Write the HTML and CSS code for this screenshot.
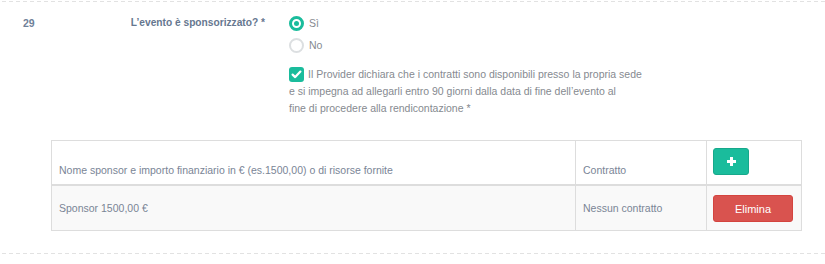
FILE: index.html
```html
<!DOCTYPE html>
<html lang="it">
<head>
<meta charset="utf-8">
<title>Sponsor</title>
<link rel="stylesheet" href="styles.css">
</head>
<body>
<div class="page">
  <div class="dash"></div>
  <section class="section">
    <div class="field">
      <div class="num">29</div>
      <div class="label">L’evento è sponsorizzato? *</div>
      <div class="options">
        <div class="radio-row"><span class="radio checked"></span><span class="opt">Sì</span></div>
        <div class="radio-row"><span class="radio"></span><span class="opt">No</span></div>
        <p class="declare"><span class="check"><svg viewBox="0 0 15 15" width="15" height="15"><path d="M3.6 7.6 L6.2 10.1 L11.4 4.6" fill="none" stroke="#fff" stroke-width="2.2" stroke-linecap="round" stroke-linejoin="round"/></svg></span>Il Provider dichiara che i contratti sono disponibili presso la propria sede<br>e si impegna ad allegarli entro 90 giorni dalla data di fine dell’evento al<br>fine di procedere alla rendicontazione *</p>
      </div>
    </div>
    <table class="grid">
      <colgroup>
        <col class="c1"><col class="c2"><col class="c3">
      </colgroup>
      <thead>
        <tr>
          <th class="txt">Nome sponsor e importo finanziario in € (es.1500,00) o di risorse fornite</th>
          <th class="txt">Contratto</th>
          <th class="act"><button class="btn btn-add" type="button"><svg viewBox="0 0 11 11" width="11" height="11"><path d="M5.5 1 V10 M1 5.5 H10" stroke="#fff" stroke-width="3"/></svg></button></th>
        </tr>
      </thead>
      <tbody>
        <tr>
          <td class="txt">Sponsor 1500,00 €</td>
          <td class="txt">Nessun contratto</td>
          <td class="act"><button class="btn btn-del" type="button">Elimina</button></td>
        </tr>
      </tbody>
    </table>
  </section>
  <div class="dash"></div>
</div>
</body>
</html>
```
FILE: styles.css
```css
* { box-sizing: border-box; }
html, body { margin: 0; padding: 0; background: #fff; }
body {
  font-family: "Liberation Sans", Arial, Helvetica, sans-serif;
  font-size: 10.5px;
  color: #7b7f86;
}
.page { padding: 1px 0 0 2px; }
.dash {
  height: 1px;
  background: repeating-linear-gradient(to right, #e2e2e2 0 4px, transparent 4px 7px);
}
.section { padding: 10px 0 22px 0; }
.field {
  display: grid;
  grid-template-columns: 100px 163px 1fr;
}
.num {
  padding-left: 21px;
  line-height: 22px;
  font-weight: bold;
  color: #6f8199;
}
.label {
  text-align: right;
  line-height: 22px;
  font-weight: bold;
  font-size: 10.2px;
  color: #66778f;
}
.options { max-width: 420px; padding-left: 24px; }
.radio-row {
  display: flex;
  align-items: center;
  height: 22px;
}
.radio {
  width: 15px;
  height: 15px;
  border-radius: 50%;
  border: 2.5px solid #dcdfe1;
  background: #fff;
  margin-right: 5px;
  flex: none;
  position: relative;
}
.radio.checked {
  border: 3px solid #1abc9c;
}
.radio.checked::after {
  content: "";
  position: absolute;
  left: 50%;
  top: 50%;
  width: 5px;
  height: 5px;
  margin: -2.5px 0 0 -2.5px;
  border-radius: 50%;
  background: #1abc9c;
}
.opt { color: #858a90; font-size: 10.5px; }
.declare {
  margin: 10px 0 0 0;
  line-height: 17px;
  color: #868a90;
  white-space: nowrap;
}
.check {
  display: inline-block;
  width: 15px;
  height: 15px;
  border-radius: 3px;
  background: #1abc9c;
  vertical-align: -4px;
  margin-right: 4px;
}
.check svg { display: block; }
.grid {
  margin: 23px 0 0 49px;
  width: 750px;
  border-collapse: collapse;
  table-layout: fixed;
  color: #7a8596;
}
.c1 { width: 524px; }
.c2 { width: 131px; }
.c3 { width: 95px; }
.grid th, .grid td {
  border: 1px solid #dddddd;
  text-align: left;
  font-weight: normal;
}
.grid thead th {
  border-bottom: 2px solid #dddddd;
  vertical-align: bottom;
}
.grid thead th.txt { padding: 0 8px 6px 7px; line-height: 15px; }
.grid thead th.act { padding: 7px 7px 9px 6px; }
.grid tbody td {
  background: #f9f9f9;
  vertical-align: middle;
}
.grid tbody td.txt { padding: 0 8px 0 7px; }
.grid tbody td.act { padding: 9px 7px 8px 6px; }
.btn {
  display: block;
  height: 27px;
  border-radius: 3px;
  font-family: inherit;
  cursor: pointer;
  padding: 0;
}
.btn-add {
  width: 36px;
  background: #1abc9c;
  border: 1px solid #17a88b;
  display: flex;
  align-items: center;
  justify-content: center;
}
.btn-add svg { display: block; }
.btn-del {
  width: 80px;
  background: #d9534f;
  border: 1px solid #d4443f;
  color: #fff;
  font-size: 11px;
}
```
